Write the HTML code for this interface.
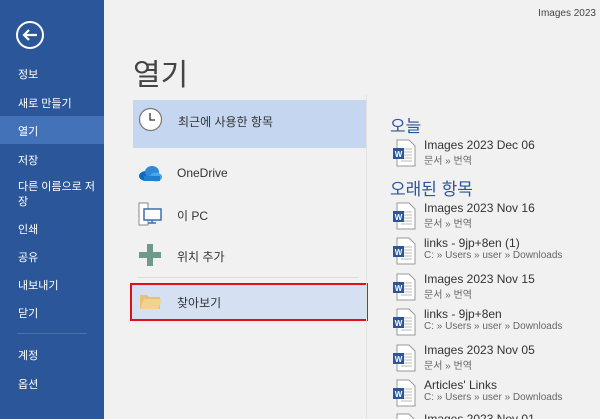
<!DOCTYPE html>
<html style="width:600px;height:419px;overflow:hidden"><head><meta charset="utf-8"><style>
*{margin:0;padding:0;box-sizing:border-box}
body{width:600px;height:419px;overflow:hidden;background:#f1f1f1;font-family:"Liberation Sans","Noto Sans CJK KR",sans-serif}
#w{position:relative;width:600px;height:419px;overflow:hidden;background:#f1f1f1}
.side{position:absolute;left:0;top:0;width:104px;height:419px;background:#2b579a;color:#fff}
.side div.it{position:absolute;left:18px;font-size:11px}
.sel{position:absolute;left:0;top:116px;width:104px;height:28px;background:#4472b8}
.abs{position:absolute}
.t{font-size:12px;color:#333;position:absolute;white-space:nowrap}
.s{font-size:10px;color:#666;position:absolute;white-space:nowrap}
</style></head><body><div id="w">
<div class="side">
<svg class="abs" style="left:15px;top:20px" width="30" height="30" viewBox="0 0 30 30"><circle cx="15" cy="15" r="13" fill="none" stroke="#fff" stroke-width="2"/><path d="M22 15H9M14 10l-5 5 5 5" fill="none" stroke="#fff" stroke-width="2.2"/></svg>
<div class="sel"></div>
<div class="it" style="top:66px">정보</div>
<div class="it" style="top:95px">새로 만들기</div>
<div class="it" style="top:123px">열기</div>
<div class="it" style="top:152px">저장</div>
<div class="it" style="top:180px;line-height:15px">다른 이름으로 저<br>장</div>
<div class="it" style="top:221px">인쇄</div>
<div class="it" style="top:249px">공유</div>
<div class="it" style="top:277px">내보내기</div>
<div class="it" style="top:305px">닫기</div>
<div class="abs" style="left:17px;top:333px;width:70px;height:1px;background:#4a6fa8"></div>
<div class="it" style="top:347px">계정</div>
<div class="it" style="top:376px">옵션</div>
</div>
<div class="abs" style="right:4px;top:8px;font-size:10px;color:#444">Images 2023</div>
<div class="abs" style="left:133px;top:50px;font-size:30px;color:#444">열기</div>
<div class="abs" style="left:133px;top:100px;width:233px;height:48px;background:#c5d7f0"></div>
<svg class="abs" style="left:138px;top:107px" width="25" height="25"><circle cx="12.5" cy="12.5" r="11" fill="#fff" stroke="#777" stroke-width="1.2"/><path d="M12 6v7h5" fill="none" stroke="#333" stroke-width="1.3"/></svg>
<div class="t" style="left:178px;top:113px">최근에 사용한 항목</div>
<svg class="abs" style="left:138px;top:164px" width="25" height="18"><ellipse cx="8" cy="12" rx="7" ry="5" fill="#0f6cbd"/><ellipse cx="14" cy="8" rx="7" ry="6" fill="#2e8ad8"/><ellipse cx="18" cy="13" rx="6" ry="4.5" fill="#4aa6ea"/><rect x="6" y="12" width="16" height="5" fill="#1f7ed0"/></svg>
<div class="t" style="left:177px;top:166px">OneDrive</div>
<svg class="abs" style="left:138px;top:202px" width="25" height="24"><rect x="1" y="1" width="9" height="22" fill="#fff" stroke="#888"/><rect x="6" y="7" width="17" height="11" fill="#fff" stroke="#3b6db5" stroke-width="1.5"/><path d="M14 18v3M10 21h8" stroke="#3b6db5" stroke-width="1.5"/></svg>
<div class="t" style="left:177px;top:207px">이 PC</div>
<svg class="abs" style="left:139px;top:244px" width="22" height="22"><path d="M8 0h6v8h8v6h-8v8H8v-8H0V8h8z" fill="#6f9a8a"/></svg>
<div class="t" style="left:177px;top:248px">위치 추가</div>
<div class="abs" style="left:137px;top:277px;width:222px;height:1px;background:#ddd"></div>
<div class="abs" style="left:130px;top:283px;width:238px;height:38px;background:#d5e1f2;border:2.5px solid #e0101a"></div>
<svg class="abs" style="left:139px;top:292px" width="24" height="18"><path d="M1 3h7l2 2h11v12H1z" fill="#e8c07a"/><path d="M1 17l4-10h18l-4 10z" fill="#f3d18f"/></svg>
<div class="t" style="left:177px;top:294px">찾아보기</div>
<div class="abs" style="left:366px;top:95px;width:1px;height:324px;background:#e2e2e2"></div>
<div class="abs" style="left:390px;top:112px;font-size:17px;color:#2b579a">오늘</div>
<div class="abs" style="left:390px;top:175px;font-size:17px;color:#2b579a">오래된 항목</div>
<div id="files"></div>
</div>
<script>
var d=[[138,"Images 2023 Dec 06","문서 » 번역"],[201,"Images 2023 Nov 16","문서 » 번역"],[236,"links - 9jp+8en (1)","C: » Users » user » Downloads"],[272,"Images 2023 Nov 15","문서 » 번역"],[307,"links - 9jp+8en","C: » Users » user » Downloads"],[343,"Images 2023 Nov 05","문서 » 번역"],[378,"Articles' Links","C: » Users » user » Downloads"],[412,"Images 2023 Nov 01",""]];
var h="";d.forEach(function(r){var y=r[0];
h+='<svg class="abs" style="left:392px;top:'+(y+1)+'px" width="24" height="28"><path d="M5 1h12l6 6v20H5z" fill="#fff" stroke="#999"/><path d="M9 10h11M9 13h11M9 16h11M9 19h11M9 22h11" stroke="#bbb"/><rect x="1" y="9" width="11" height="11" fill="#2b579a"/><text x="6.5" y="18" font-size="8" font-weight="bold" fill="#fff" text-anchor="middle" font-family="Liberation Sans">W</text></svg>';
h+='<div class="t" style="left:424px;top:'+y+'px">'+r[1]+'</div><div class="s" style="left:424px;top:'+(y+14)+'px">'+r[2]+'</div>';});
document.getElementById("files").innerHTML=h;
</script>
</body></html>
